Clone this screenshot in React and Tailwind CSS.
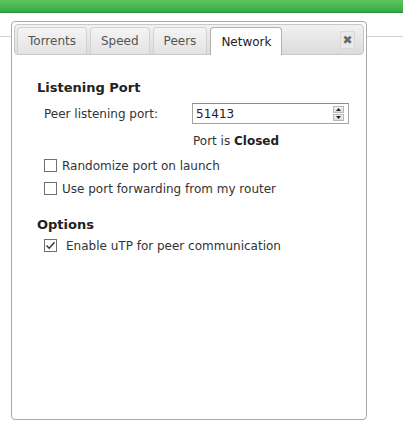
const TABS = ["Torrents", "Speed", "Peers", "Network"]

function Check({ checked }) {
  return (
    <span className="w-[13px] h-[13px] border border-[#6f6f6f] bg-white flex items-center justify-center shrink-0">
      {checked && (
        <svg width="11" height="11" viewBox="0 0 11 11">
          <path d="M1.5 5.5 L4.2 8.3 L9.5 2.2" fill="none" stroke="#333" strokeWidth="1.4" />
        </svg>
      )}
    </span>
  )
}

function Spinner() {
  return (
    <div className="flex flex-col gap-[1px] w-[11px]">
      <div className="h-[7px] bg-gradient-to-b from-[#f4f4f4] to-[#dcdcdc] border border-[#b8b8b8] flex items-center justify-center">
        <svg width="5" height="3" viewBox="0 0 5 3"><path d="M0 3 L2.5 0 L5 3 Z" fill="#222" /></svg>
      </div>
      <div className="h-[7px] bg-gradient-to-b from-[#f4f4f4] to-[#dcdcdc] border border-[#b8b8b8] flex items-center justify-center">
        <svg width="5" height="3" viewBox="0 0 5 3"><path d="M0 0 L2.5 3 L5 0 Z" fill="#222" /></svg>
      </div>
    </div>
  )
}

export default function App() {
  return (
    <div className="w-[403px] h-[433px] bg-white overflow-hidden font-['DejaVu_Sans',Verdana,sans-serif] text-[#333]">
      <div className="h-[13px] bg-gradient-to-b from-[#5cc65f] to-[#34aa41] border-b border-[#2c923a]" />

      <div className="flex">
        <div className="w-[11px] h-[24px] border-b border-[#cfcfcf]" />

        <div className="w-[356px] h-[399px] mt-[8px] border border-[#a9a9a9] rounded-[4px] p-[2px] flex flex-col">
          <div className="h-[31px] border border-[#c8c8c8] rounded-[4px] bg-gradient-to-b from-[#f1f1f1] to-[#dcdcdc] flex items-end gap-[3px] pl-[2px] pr-[8px]">
            {TABS.map(t => (
              <div key={t}
                className={`px-[10px] rounded-t-[4px] border border-b-0 text-[12px] flex items-center
                  ${t === "Network"
                    ? "h-[28px] -mb-px bg-white border-[#b0b0b0] text-[#222]"
                    : "h-[27px] bg-gradient-to-b from-[#f4f4f4] to-[#e3e3e3] border-[#d2d2d2] text-[#555]"}`}>
                {t}
              </div>
            ))}
            <div className="ml-auto self-center w-[15px] h-[18px] bg-[#e9e9e9] border border-[#d8d8d8] rounded-[2px] flex items-center justify-center text-[12px] text-[#6a6a6a] font-bold leading-none">
              ✖
            </div>
          </div>

          <div className="pl-[23px] pt-[25px] text-[12px]">
            <h3 className="text-[13px] font-bold text-[#222] leading-[16px]">Listening Port</h3>

            <div className="flex items-center mt-[7px] pl-[7px]">
              <span className="w-[148px]">Peer listening port:</span>
              <div className="w-[157px] h-[21px] border border-[#a3a3a3] border-t-[#8c8c8c] flex items-center pl-[3px] pr-[4px]">
                <span className="flex-1 text-[#222]">51413</span>
                <Spinner />
              </div>
            </div>

            <div className="pl-[156px] mt-[10px] leading-[15px]">
              Port is <b className="text-[#222]">Closed</b>
            </div>

            <div className="flex items-center gap-[5px] pl-[7px] mt-[9px] h-[15px]">
              <Check />
              <span>Randomize port on launch</span>
            </div>
            <div className="flex items-center gap-[5px] pl-[7px] mt-[8px] h-[15px]">
              <Check />
              <span>Use port forwarding from my router</span>
            </div>

            <h3 className="text-[13px] font-bold text-[#222] leading-[16px] mt-[21px]">Options</h3>

            <div className="flex items-center gap-[9px] pl-[7px] mt-[5px] h-[15px]">
              <Check checked />
              <span>Enable uTP for peer communication</span>
            </div>
          </div>
        </div>

        <div className="flex-1 h-[24px] border-b border-[#cfcfcf]" />
      </div>
    </div>
  )
}
